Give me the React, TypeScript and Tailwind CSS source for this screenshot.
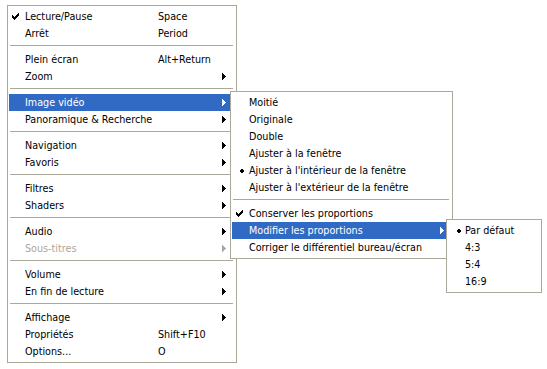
import React from "react";

type Item =
  | "sep"
  | {
      l: string;
      s?: string;
      sub?: boolean;
      hi?: boolean;
      off?: boolean;
      mark?: "check" | "dot";
    };

const MAIN: Item[] = [
  { l: "Lecture/Pause", s: "Space", mark: "check" },
  { l: "Arrêt", s: "Period" },
  "sep",
  { l: "Plein écran", s: "Alt+Return" },
  { l: "Zoom", sub: true },
  "sep",
  { l: "Image vidéo", sub: true, hi: true },
  { l: "Panoramique & Recherche", sub: true },
  "sep",
  { l: "Navigation", sub: true },
  { l: "Favoris", sub: true },
  "sep",
  { l: "Filtres", sub: true },
  { l: "Shaders", sub: true },
  "sep",
  { l: "Audio", sub: true },
  { l: "Sous-titres", sub: true, off: true },
  "sep",
  { l: "Volume", sub: true },
  { l: "En fin de lecture", sub: true },
  "sep",
  { l: "Affichage", sub: true },
  { l: "Propriétés", s: "Shift+F10" },
  { l: "Options...", s: "O" },
];

const VIDEO: Item[] = [
  { l: "Moitié" },
  { l: "Originale" },
  { l: "Double" },
  { l: "Ajuster à la fenêtre" },
  { l: "Ajuster à l'intérieur de la fenêtre", mark: "dot" },
  { l: "Ajuster à l'extérieur de la fenêtre" },
  "sep",
  { l: "Conserver les proportions", mark: "check" },
  { l: "Modifier les proportions", sub: true, hi: true },
  { l: "Corriger le différentiel bureau/écran" },
];

const RATIO: Item[] = [
  { l: "Par défaut", mark: "dot" },
  { l: "4:3" },
  { l: "5:4" },
  { l: "16:9" },
];

// small pixel glyphs, drawn like the XP ones
function Arrow({ color }: { color: string }) {
  return (
    <svg width="4" height="7" viewBox="0 0 4 7" shapeRendering="crispEdges" fill={color}>
      <rect x="0" y="0" width="1" height="7" />
      <rect x="1" y="1" width="1" height="5" />
      <rect x="2" y="2" width="1" height="3" />
      <rect x="3" y="3" width="1" height="1" />
    </svg>
  );
}

function Check({ color }: { color: string }) {
  const px = [
    [6, 0], [5, 1], [6, 1], [0, 2], [4, 2], [5, 2], [6, 2],
    [0, 3], [1, 3], [3, 3], [4, 3], [5, 3],
    [0, 4], [1, 4], [2, 4], [3, 4], [4, 4],
    [1, 5], [2, 5], [3, 5], [2, 6],
  ];
  return (
    <svg width="7" height="7" viewBox="0 0 7 7" shapeRendering="crispEdges" fill={color}>
      {px.map(([x, y]) => (
        <rect key={`${x}-${y}`} x={x} y={y} width="1" height="1" />
      ))}
    </svg>
  );
}

function Dot({ color }: { color: string }) {
  return (
    <svg width="4" height="4" viewBox="0 0 4 4" shapeRendering="crispEdges" fill={color}>
      <rect x="1" y="0" width="2" height="4" />
      <rect x="0" y="1" width="4" height="2" />
    </svg>
  );
}

type Cols = {
  gutter: string; // width of the left column
  checkPad: string;
  dotPad: string;
  shortcut?: string;
  arrow: string;
};

function Menu({ items, cols, className }: { items: Item[]; cols: Cols; className: string }) {
  return (
    <div className={`absolute flex flex-col bg-white border border-[#aca899] px-[1px] py-[2px] ${className}`}>
      {items.map((it, i) => {
        if (it === "sep") {
          return (
            <div key={i} className="h-[9px] pt-[3px] pl-[1px] pr-[2px]">
              <div className="h-px bg-[#aca899]" />
            </div>
          );
        }
        const fg = it.hi ? "#ffffff" : it.off ? "#aca899" : "#000000";
        const txt = it.hi ? "text-white" : it.off ? "text-[#aca899]" : "text-black";
        return (
          <div key={i} className={`flex h-[17px] items-center ${it.hi ? "bg-[#316ac5]" : ""} ${txt}`}>
            <div className={`flex h-full shrink-0 items-center ${cols.gutter} ${it.mark === "dot" ? cols.dotPad : cols.checkPad}`}>
              {it.mark === "check" && <Check color={fg} />}
              {it.mark === "dot" && <Dot color={fg} />}
            </div>
            <div className="flex-1 whitespace-nowrap leading-[17px]">{it.l}</div>
            {cols.shortcut && <div className={`shrink-0 whitespace-nowrap leading-[17px] ${cols.shortcut}`}>{it.s}</div>}
            <div className={`flex h-full shrink-0 items-center pl-[4px] ${cols.arrow}`}>
              {it.sub && <Arrow color={fg} />}
            </div>
          </div>
        );
      })}
    </div>
  );
}

export default function App() {
  return (
    <div
      className="relative h-[369px] w-[547px] overflow-hidden bg-white text-[10.7px] text-black"
      style={{ fontFamily: '"DejaVu Sans Condensed", "DejaVu Sans", sans-serif' }}
    >
      <Menu
        items={MAIN}
        className="left-[7px] top-[5px] w-[230px]"
        cols={{ gutter: "w-[16px]", checkPad: "pl-[3px]", dotPad: "pl-[4px]", shortcut: "w-[60px]", arrow: "w-[17px]" }}
      />
      <Menu
        items={VIDEO}
        className="left-[230px] top-[91px] w-[223px]"
        cols={{ gutter: "w-[17px]", checkPad: "pl-[4px]", dotPad: "pl-[8px]", arrow: "w-[15px]" }}
      />
      <Menu
        items={RATIO}
        className="left-[446px] top-[219px] w-[96px]"
        cols={{ gutter: "w-[17px]", checkPad: "pl-[4px]", dotPad: "pl-[9px]", arrow: "w-[4px]" }}
      />
    </div>
  );
}
